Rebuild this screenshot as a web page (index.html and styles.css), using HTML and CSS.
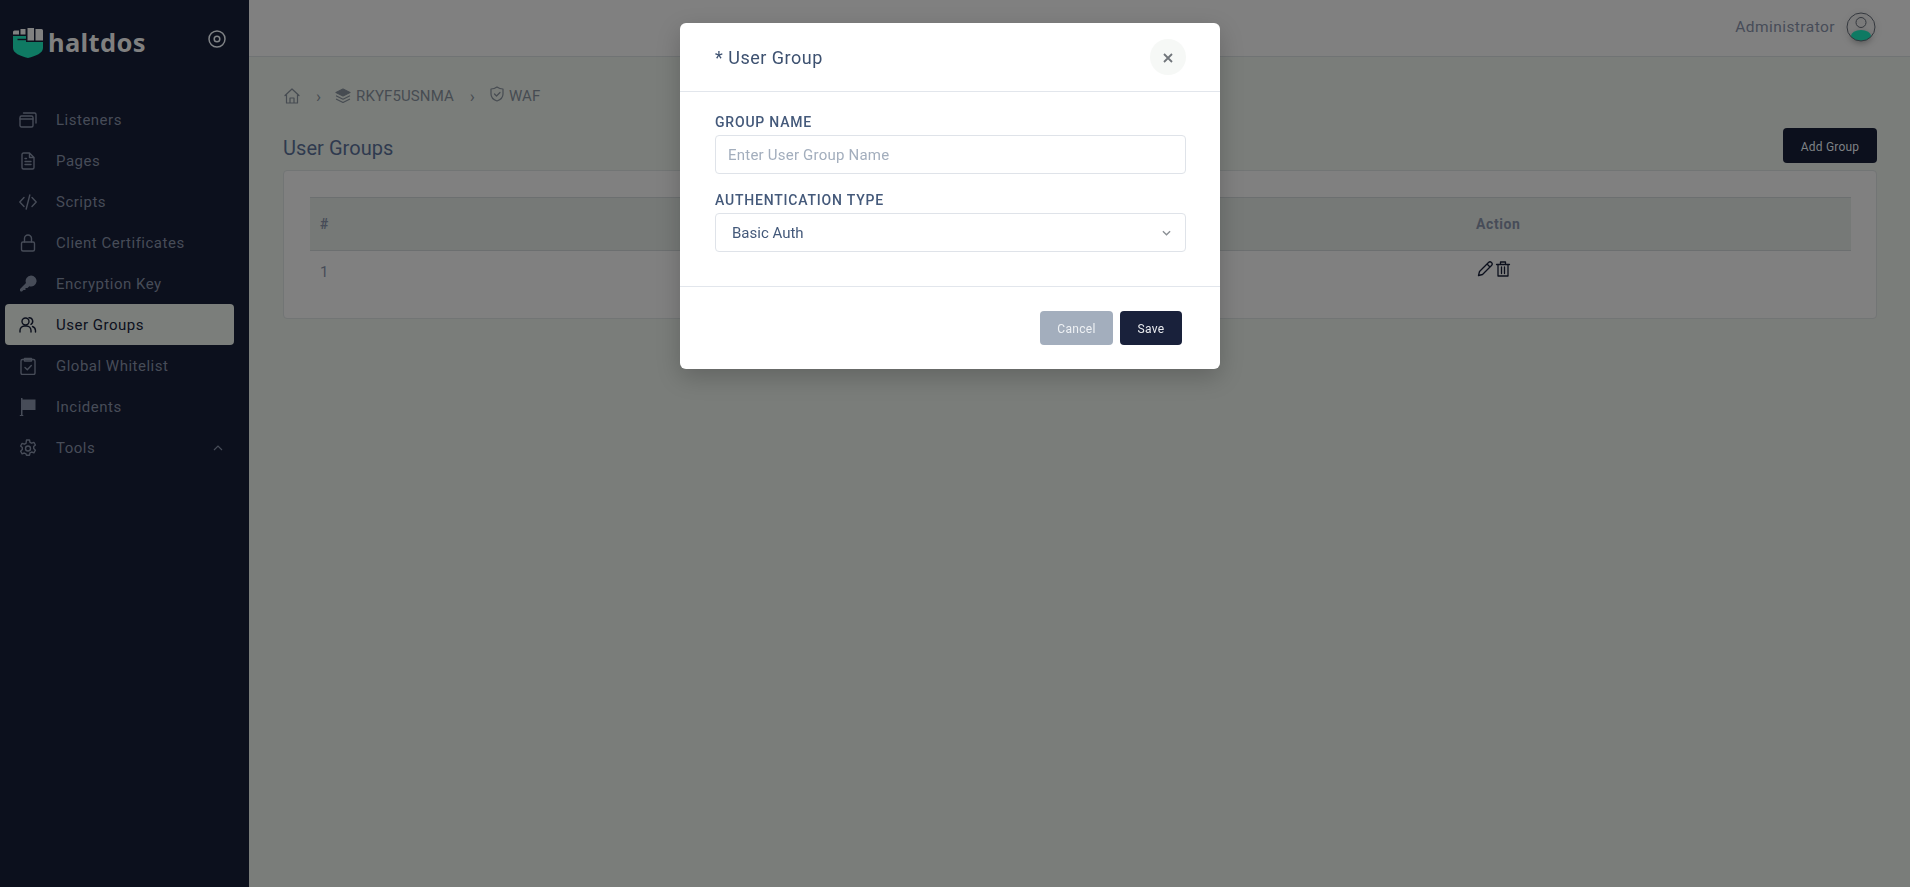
FILE: index.html
```html
<!DOCTYPE html>
<html lang="en">
<head>
<meta charset="utf-8">
<title>User Groups</title>
<link rel="stylesheet" href="styles.css">
</head>
<body>
<div class="app">
  <aside class="sidebar">
    <div class="brand">
      <svg class="logo" viewBox="0 0 30 30" width="30" height="30">
        <path d="M0 8H13V14H30V20C30 25 23 28 15 30 7 28 0 25 0 20Z" fill="#0f7a63"/>
        <path d="M4.500 11.500H13.500" fill="none" stroke="#0c101d" stroke-width="1.400"/>
        <path d="M0 4q0-1.500 1.500-1.500H6v4H0zM7.500 1h5v5.500h-5zM14.500 0H21v12.500h-6.500zM22.500 1h6q1.500 0 1.500 1.500v10h-7.500z" fill="#808080"/>
      </svg>
      <span class="brand-name">haltdos</span>
      <svg class="brand-toggle" viewBox="0 0 18 18" width="18" height="18"><circle cx="9" cy="9" r="8" fill="none" stroke="#808386" stroke-width="1.500"/><circle cx="9" cy="9" r="2.800" fill="none" stroke="#808386" stroke-width="1.500"/></svg>
    </div>
    <nav class="nav">
      <a class="nav-item"><svg class="nav-icon" viewBox="0 0 18 18"><rect x="1" y="5" width="13" height="11" rx="1.500"/><path d="M1 8h13M4.500 2h11q1.500 0 1.500 1.500V12"/></svg><span>Listeners</span></a>
      <a class="nav-item"><svg class="nav-icon" viewBox="0 0 18 18"><path d="M10.500 1H4.500a1.500 1.500 0 0 0-1.500 1.500v13a1.500 1.500 0 0 0 1.500 1.500h9a1.500 1.500 0 0 0 1.500-1.500V5.500zM10.500 1v4.500H15M6 9.500h6M6 12.500h6M6 6.500h1.500"/></svg><span>Pages</span></a>
      <a class="nav-item"><svg class="nav-icon" viewBox="0 0 18 18"><path d="M5 4.500 .8 9 5 13.500M13 4.500 17.200 9 13 13.500M10.800 2 7.200 16"/></svg><span>Scripts</span></a>
      <a class="nav-item"><svg class="nav-icon" viewBox="0 0 18 18"><rect x="2.500" y="8" width="13" height="9" rx="1.500"/><path d="M5.500 8V4.500a3.500 3.500 0 0 1 7 0V8"/></svg><span>Client Certificates</span></a>
      <a class="nav-item"><svg class="nav-icon nav-icon-solid" viewBox="0 0 18 18"><path d="M12 .5a5.500 5.500 0 1 1-1.700 10.700L8.500 13H6.500v2h-2L3 16.500H2A1 1 0 0 1 1 15.500v-1.400L7 8A5.500 5.500 0 0 1 12 .5z"/></svg><span>Encryption Key</span></a>
      <a class="nav-item is-active"><svg class="nav-icon" viewBox="0 0 18 18"><circle cx="6.500" cy="5.500" r="3.500"/><path d="M1 16v-1.500a4.500 4.500 0 0 1 4.500-4.500h2a4.500 4.500 0 0 1 4.500 4.500V16M10 1.800a3.500 3.500 0 0 1 2 6.500M13.500 10.500a4.500 4.500 0 0 1 3 4V16"/></svg><span>User Groups</span></a>
      <a class="nav-item"><svg class="nav-icon" viewBox="0 0 18 18"><rect x="2" y="2.500" width="14" height="15" rx="1.500"/><path d="M5.500 1.500h7v2.500h-7zM6 10.500l2.300 2.300 4-4.300"/></svg><span>Global Whitelist</span></a>
      <a class="nav-item"><svg class="nav-icon nav-icon-solid" viewBox="0 0 18 18"><path d="M2 0h1.500v18H2zM.8 17h3.500v1H.8zM3.500 1.500H16.500V12H3.500z"/></svg><span>Incidents</span></a>
      <a class="nav-item"><svg class="nav-icon" viewBox="0 0 18 18"><path d="M7.500 1h3l.5 2.300 1.700.9 2.200-.8 1.500 2.600-1.700 1.600v2l1.700 1.600-1.500 2.600-2.200-.8-1.700.9-.5 2.300h-3L7 14.900l-1.700-.9-2.200.8-1.500-2.600L3.300 10.600v-2L1.600 7l1.500-2.600 2.200.8L7 4.300z"/><circle cx="9" cy="9.500" r="2.500"/></svg><span>Tools</span><svg class="nav-caret" viewBox="0 0 10 6" width="10" height="6"><path d="M1 5l4-4 4 4"/></svg></a>
    </nav>
  </aside>
  <div class="main">
    <header class="topbar">
      <span class="user-name">Administrator</span>
      <svg class="avatar" viewBox="0 0 30 30" width="30" height="30"><defs><clipPath id="avatar-clip"><circle cx="15" cy="15" r="14"/></clipPath></defs><g clip-path="url(#avatar-clip)"><ellipse cx="15" cy="24" rx="10" ry="6" fill="#0f7a63"/></g><circle cx="15" cy="15" r="14" fill="none" stroke="#33373d"/><circle cx="15" cy="10.500" r="5" fill="none" stroke="#33373d"/></svg>
    </header>
    <main class="content">
      <div class="breadcrumb">
        <svg class="crumb-icon crumb-home" viewBox="0 0 16 16"><path d="M1 7.500 8 1l7 6.500M2.500 6.500V15h11V6.500M6 15v-5h4v5"/></svg>
        <span class="crumb-sep">›</span>
        <svg class="crumb-icon" viewBox="0 0 16 16"><path class="crumb-fill" d="M8 1l7 3.500L8 8 1 4.500z"/><path d="M1.500 8 8 11.200 14.500 8M1.500 11.200 8 14.500l6.500-3.300"/></svg>
        <span class="crumb-text">RKYF5USNMA</span>
        <span class="crumb-sep">›</span>
        <svg class="crumb-icon crumb-raised" viewBox="0 0 16 16"><path d="M8 1c2 1.500 4 2 6 2v5c0 3.500-2.500 5.800-6 7-3.500-1.200-6-3.500-6-7V3c2 0 4-.5 6-2z"/><path d="M5.500 8l2 2 3.500-3.500"/></svg>
        <span class="crumb-text">WAF</span>
      </div>
      <div class="title-row">
        <h1 class="page-title">User Groups</h1>
        <button class="btn btn-add" type="button">Add Group</button>
      </div>
      <section class="card">
        <table class="table">
          <thead><tr><th class="col-index">#</th><th class="col-action">Action</th></tr></thead>
          <tbody><tr><td>1</td><td class="actions">
            <svg viewBox="0 0 16 16" width="16" height="16"><path d="M1.500 14.500l1-4L11.500 1.500a1.500 1.500 0 0 1 3 3L5.500 13.500zM10 3l3 3"/></svg>
            <svg viewBox="0 0 16 16" width="16" height="16"><path d="M1.500 3.500h13M3 3.500V15h10V3.500M5.500 3.500V1h5v2.500M6.500 6v6.500M9.500 6v6.500"/></svg>
          </td></tr></tbody>
        </table>
      </section>
    </main>
  </div>
</div>
<div class="overlay">
  <div class="modal">
    <div class="modal-head">
      <h2 class="modal-title">* User Group</h2>
      <button class="modal-close" type="button" aria-label="Close"><svg viewBox="0 0 10 10" width="10" height="10"><path d="M1 1l8 8M9 1l-8 8"/></svg></button>
    </div>
    <div class="modal-body">
      <label class="field-label" for="group-name">GROUP NAME</label>
      <input class="field" id="group-name" type="text" placeholder="Enter User Group Name">
      <label class="field-label field-label-second" for="auth-type">AUTHENTICATION TYPE</label>
      <div class="select-wrap">
        <select class="field field-select" id="auth-type"><option>Basic Auth</option></select>
        <svg class="select-caret" viewBox="0 0 10 6" width="9" height="6"><path d="M1 1l4 4 4-4"/></svg>
      </div>
    </div>
    <div class="modal-foot">
      <button class="btn btn-cancel" type="button">Cancel</button>
      <button class="btn btn-save" type="button">Save</button>
    </div>
  </div>
</div>
</body>
</html>
```
FILE: styles.css
```css
* { box-sizing: border-box; }
html, body { margin: 0; height: 100%; }
body { font-family: Roboto, "Liberation Sans", sans-serif; background: #f5f8f5; color: #3d5170; overflow: hidden; }
.app { display: flex; height: 887px; }

.sidebar { width: 249px; flex: none; background: #0c101d; padding: 0 5px; }
.brand { height: 99px; display: flex; align-items: flex-start; padding: 28px 0 0 8px; }
.logo { flex: none; }
.brand-name { margin: 1px 0 0 5px; font: 700 25.500px/26px "Noto Sans", sans-serif; color: #808080; letter-spacing: .35px; }
.brand-toggle { margin: 2px 18px 0 auto; }
.nav { display: flex; flex-direction: column; }
.nav-item { height: 41px; display: flex; align-items: center; padding-left: 14px; width: 229px; border-radius: 4px; font-size: 15px; letter-spacing: .5px; color: #474c58; }
.nav-item span { margin-left: 19px; }
.nav-icon { width: 18px; height: 18px; flex: none; fill: none; stroke: #474c58; stroke-width: 1.400; stroke-linejoin: round; stroke-linecap: round; }
.nav-icon-solid { fill: #474c58; stroke: none; }
.nav-item.is-active { background: #7b7e7b; color: #0c101d; }
.nav-item.is-active .nav-icon { stroke: #0c101d; }
.nav-caret { margin-left: auto; margin-right: 11px; fill: none; stroke: #474c58; stroke-width: 1.200; }

.main { flex: 1; min-width: 0; background: #7a7d7a; display: flex; flex-direction: column; }
.topbar { height: 57px; flex: none; background: #808080; border-bottom: 1px solid #707374; display: flex; align-items: center; justify-content: flex-end; padding: 0 34px 3px 0; }
.user-name { font-size: 15.500px; letter-spacing: .45px; color: #474c58; margin-right: 11px; }
.avatar { filter: drop-shadow(0 2px 3px rgba(0,0,0,.3)); }

.content { padding: 30px 33px 0 34px; }
.breadcrumb { display: flex; align-items: center; height: 18px; font-size: 15px; color: #474c52; }
.crumb-icon { width: 16px; height: 16px; flex: none; fill: none; stroke: #474c52; stroke-width: 1.200; stroke-linejoin: round; stroke-linecap: round; }
.crumb-home { margin-left: 1px; }
.crumb-fill { fill: #474c52; }
.crumb-raised { margin: -4px -1px 0 0; }
.crumb-sep { margin: 0 14px 0 16px; font-size: 17px; line-height: 18px; }
.crumb-text { margin-left: 5px; letter-spacing: .1px; }

.title-row { display: flex; align-items: center; justify-content: space-between; margin-top: 23px; height: 35px; }
.page-title { margin: 0; font-size: 20px; font-weight: 400; color: #2f3a4f; letter-spacing: .05px; position: relative; top: 2px; }
.btn { border: 0; border-radius: 4px; font-family: inherit; font-size: 12px; padding: 2px 0 0; }
.btn-add { width: 94px; height: 35px; background: #0c101d; color: #7f8286; letter-spacing: .2px; }

.card { margin-top: 7px; height: 149px; background: #808080; border: 1px solid #727575; border-radius: 4px; padding: 26px 25px 0 26px; }
.table { width: 100%; border-collapse: collapse; font-size: 15px; color: #474c58; }
.table th { height: 53px; background: #767977; border-top: 1px solid #6c6f70; border-bottom: 1px solid #6c6f70; text-align: left; font-size: 14px; font-weight: 700; letter-spacing: .6px; padding: 0 10px; }
.table td { height: 42px; padding: 0 10px; }
.col-action { width: 385px; }
.actions svg { fill: none; stroke: #0c101d; stroke-width: 1.300; stroke-linejoin: round; stroke-linecap: round; margin-right: -2px; position: relative; top: -1px; }
.actions svg:first-child { margin-left: 1px; }

.overlay { position: fixed; inset: 0; padding: 23px 10px 0 0; display: flex; justify-content: center; align-items: flex-start; }
.modal { width: 540px; height: 346px; background: #fff; border-radius: 6px; box-shadow: 0 8px 24px rgba(0,0,0,.2); display: flex; flex-direction: column; }
.modal-head { height: 69px; flex: none; border-bottom: 1px solid #e2e6ec; display: flex; align-items: center; justify-content: space-between; padding: 0 34px 0 35px; }
.modal-title { margin: 0; font-size: 18px; font-weight: 400; color: #3d5170; letter-spacing: .5px; }
.modal-close { width: 36px; height: 36px; padding: 0; border: 0; border-radius: 50%; background: #f6f8f6; display: flex; align-items: center; justify-content: center; }
.modal-close svg { fill: none; stroke: #70757a; stroke-width: 1.800; margin-top: 2px; }
.modal-body { flex: 1; padding: 21px 34px 0 35px; }
.field-label { display: block; font-size: 14px; line-height: 18px; font-weight: 500; letter-spacing: .8px; color: #44597a; }
.field-label-second { margin-top: 17px; }
.field { display: block; width: 100%; height: 39px; margin-top: 4px; border: 1px solid #dfe3e9; border-radius: 4px; background: #fff; font-family: inherit; font-size: 15px; letter-spacing: .22px; color: #44597a; padding: 0 12px; outline: 0; }
.field::placeholder { color: #a3aebd; opacity: 1; }
.select-wrap { position: relative; }
.field-select { appearance: none; padding-left: 16px; letter-spacing: 0; }
.select-caret { position: absolute; right: 15px; top: 17px; fill: none; stroke: #8a8f94; stroke-width: 1.500; }
.modal-foot { height: 83px; flex: none; border-top: 1px solid #e2e6ec; display: flex; justify-content: flex-end; align-items: flex-start; gap: 7px; padding: 24px 38px 0 0; }
.btn-cancel { width: 73px; height: 34px; background: #a3aebd; color: #eef1f4; letter-spacing: .3px; }
.btn-save { width: 62px; height: 34px; background: #19213b; color: #e8eaee; letter-spacing: .3px; }
```
